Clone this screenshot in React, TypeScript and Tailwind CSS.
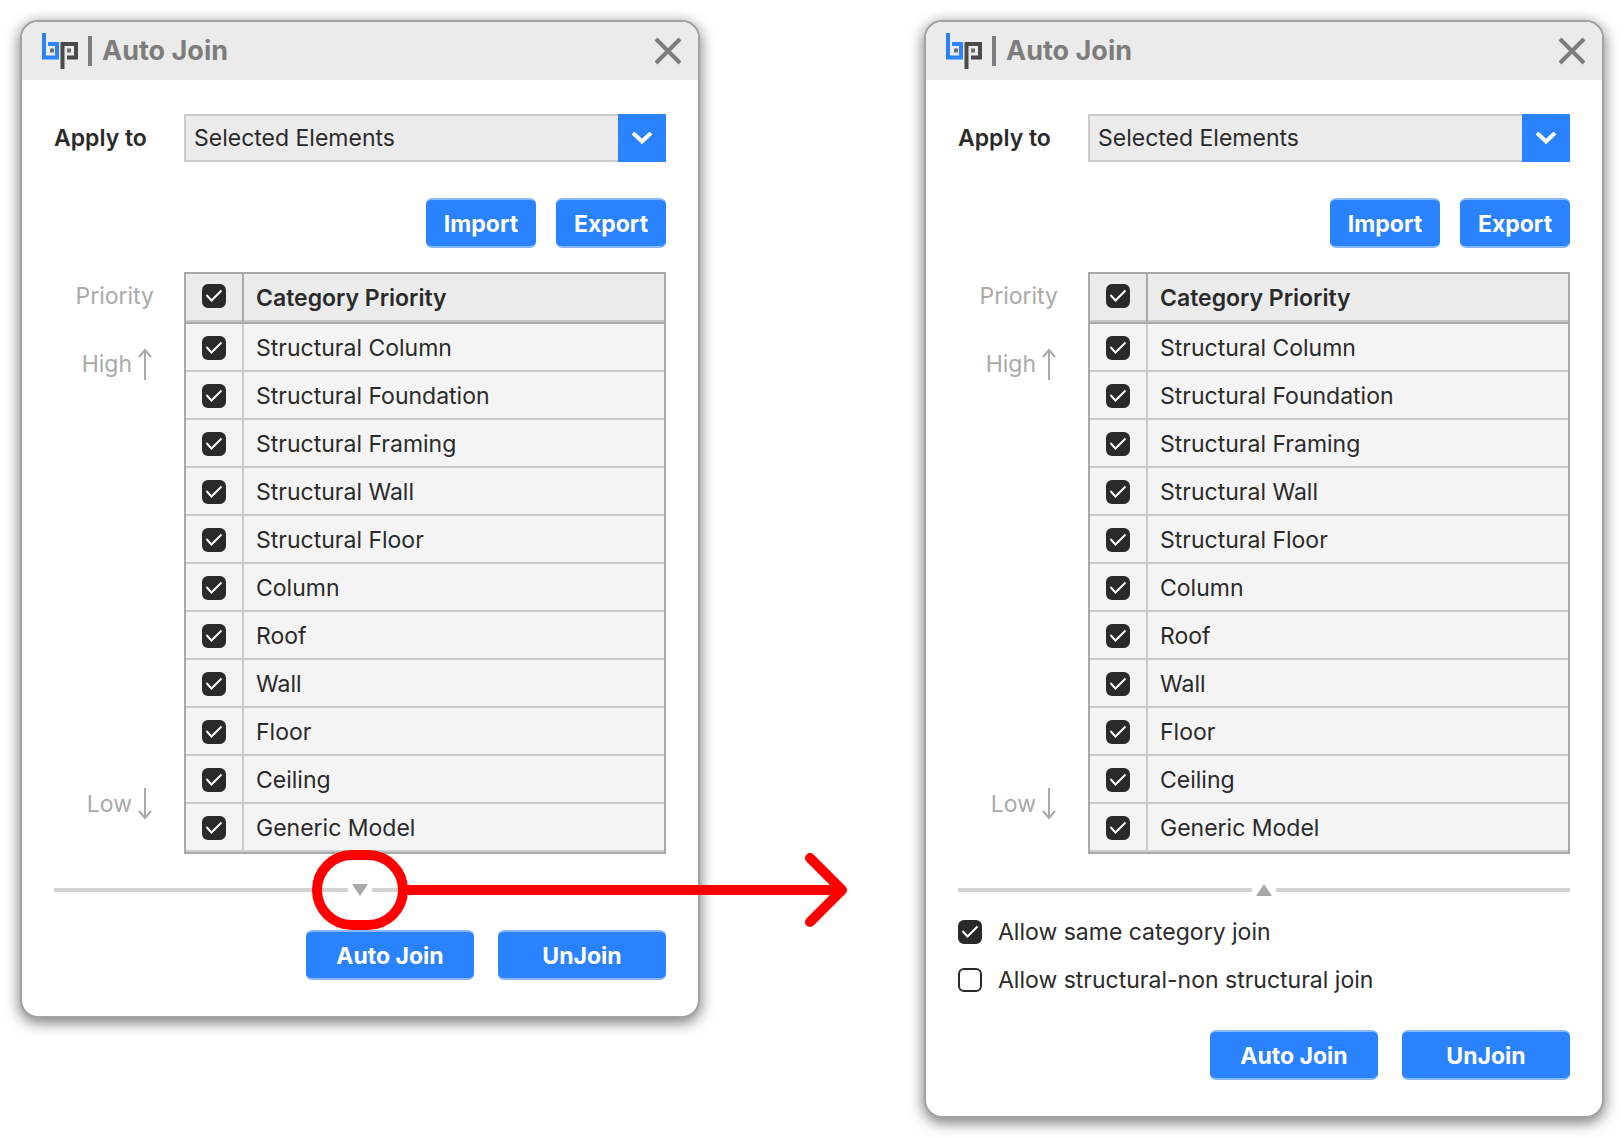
import { useId, useState } from "react";

const CATEGORIES = [
  "Structural Column",
  "Structural Foundation",
  "Structural Framing",
  "Structural Wall",
  "Structural Floor",
  "Column",
  "Roof",
  "Wall",
  "Floor",
  "Ceiling",
  "Generic Model",
];

function Logo() {
  return (
    <svg className="h-9 w-9 shrink-0" viewBox="0 0 36 36" fill="none" aria-hidden="true">
      <path d="M2 0V24.5H15V11H6" stroke="#2a82ff" strokeWidth="4" />
      <path d="M20.5 36V11H34V24.5H25" stroke="#4a4a4a" strokeWidth="4" />
      <rect x="8" y="15.5" width="4" height="4" fill="#6b6b6b" />
      <rect x="25" y="15.5" width="4" height="4" fill="#6b6b6b" />
    </svg>
  );
}

function CheckBox({ id, label, initial = true }: { id: string; label?: string; initial?: boolean }) {
  const [checked, setChecked] = useState(initial);
  return (
    <span className="grid size-6 shrink-0 grid-cols-1 grid-rows-1">
      <input
        id={id}
        type="checkbox"
        aria-label={label}
        checked={checked}
        onChange={() => setChecked(!checked)}
        className="col-start-1 row-start-1 size-6 appearance-none rounded-md border-2 border-[#2a2a2a] bg-white checked:bg-[#2a2a2a]"
      />
      {checked && (
        <svg
          className="pointer-events-none col-start-1 row-start-1 size-6"
          viewBox="0 0 24 24"
          fill="none"
          stroke="#ffffff"
          strokeWidth="2"
          aria-hidden="true"
        >
          <path d="M4.5 11L9.5 16.5L19.5 6.5" />
        </svg>
      )}
    </span>
  );
}

function LongArrow({ down = false }: { down?: boolean }) {
  return (
    <svg className="h-8 w-3.5" viewBox="0 0 14 32" fill="none" stroke="#a9a9a9" strokeWidth="2" aria-hidden="true">
      {down ? <path d="M7 0V31M1 23L7 30L13 23" /> : <path d="M7 32V1M1 9L7 2L13 9" />}
    </svg>
  );
}

function Button({ children, wide = false }: { children: string; wide?: boolean }) {
  return (
    <button
      type="button"
      className={`h-[50px] rounded-md border-y-2 border-[#86b7ff] bg-[#2a82ff] pt-0.5 text-[23px] font-bold text-white ${wide ? "w-[168px]" : "w-[110px]"}`}
    >
      {children}
    </button>
  );
}

function Callout() {
  return (
    <div className="pointer-events-none absolute top-1/2 left-1/2 z-10 flex -translate-x-12 -translate-y-1/2 items-center">
      <div className="h-20 w-24 shrink-0 rounded-[40px] border-10 border-[#ff0000]" />
      <svg
        className="-ml-1 h-20 w-[444px] shrink-0"
        viewBox="0 0 444 80"
        fill="none"
        stroke="#ff0000"
        strokeWidth="10"
        strokeLinecap="round"
        strokeLinejoin="round"
        aria-hidden="true"
      >
        <path d="M5 40H438M406 8L438 40L406 72" />
      </svg>
    </div>
  );
}

function Dialog({ expanded = false }: { expanded?: boolean }) {
  const id = useId();
  return (
    <section className="rounded-[18px] border-2 border-[#a2a2a2] bg-white text-[23px] leading-7 text-[#2a2a2a] shadow-[0_4px_14px_1px_rgba(0,0,0,0.5)]">
      <header className="flex h-[58px] items-center rounded-t-[16px] bg-[#ebebeb] pr-4 pl-5 text-[#7d7d7d]">
        <Logo />
        <span className="mr-2.5 ml-2.5 h-[30px] w-1 bg-[#7d7d7d]" />
        <h2 className="flex-1 text-[27px] font-bold">Auto Join</h2>
        <button type="button" aria-label="Close">
          <svg className="size-7" viewBox="0 0 28 28" fill="none" stroke="#7d7d7d" strokeWidth="4" aria-hidden="true">
            <path d="M2 2L26 26M26 2L2 26" />
          </svg>
        </button>
      </header>

      <div className="px-8 pt-[34px] pb-9">
        <div className="flex h-12 items-center">
          <label htmlFor={`${id}-scope`} className="w-[130px] shrink-0 font-semibold">
            Apply to
          </label>
          <div className="relative h-12 flex-1">
            <select
              id={`${id}-scope`}
              className="h-12 w-full appearance-none border-2 border-[#cbcbcb] bg-[#ebebeb] pl-2"
            >
              <option>Selected Elements</option>
            </select>
            <span className="pointer-events-none absolute inset-y-0 right-0 grid w-12 place-items-center bg-[#2a82ff]">
              <svg className="h-3 w-5" viewBox="0 0 20 12" fill="none" stroke="#ffffff" strokeWidth="4" aria-hidden="true">
                <path d="M1 1L10 9.5L19 1" />
              </svg>
            </span>
          </div>
        </div>

        <div className="mt-9 flex justify-end gap-5">
          <Button>Import</Button>
          <Button>Export</Button>
        </div>

        <div className="mt-6 flex">
          <div className="flex w-[130px] shrink-0 flex-col items-end pt-2.5 pr-[30px] pb-[34px] text-[#a9a9a9]">
            <span>Priority</span>
            <span className="mt-[38px] flex items-center gap-1.5 pr-0.5">
              High
              <LongArrow />
            </span>
            <span className="mt-auto flex items-center gap-1.5 pr-0.5">
              Low
              <LongArrow down />
            </span>
          </div>

          <div className="flex-1 border-2 border-[#a9a9a9]">
            <table className="w-full border-separate border-spacing-0">
              <thead>
                <tr className="bg-[#ebebeb]">
                  <th className="h-[50px] w-[58px] border-r-2 border-b-2 border-[#a9a9a9] p-0 pb-1 pl-4 shadow-[inset_0_-2px_0_#c6c6c6]">
                    <CheckBox id={`${id}-all`} label="All categories" />
                  </th>
                  <th className="border-b-2 border-[#a9a9a9] p-0 pl-3 text-left font-semibold shadow-[inset_0_-2px_0_#c6c6c6]">
                    Category Priority
                  </th>
                </tr>
              </thead>
              <tbody>
                {CATEGORIES.map((name, i) => (
                  <tr key={name} className="bg-[#f4f4f4]">
                    <td className="h-12 border-r-2 border-b-2 border-[#cbcbcb] p-0 pt-0.5 pl-4">
                      <CheckBox id={`${id}-cat-${i}`} />
                    </td>
                    <td className="border-b-2 border-[#cbcbcb] p-0 pt-0.5 pl-3">
                      <label htmlFor={`${id}-cat-${i}`}>{name}</label>
                    </td>
                  </tr>
                ))}
              </tbody>
            </table>
          </div>
        </div>

        <div className="relative mt-[26px] flex h-5 items-center gap-1">
          <span className="h-1 flex-1 bg-[#d2d2d2]" />
          <button type="button" aria-expanded={expanded} aria-label="More options">
            <svg className="h-3 w-4" viewBox="0 0 16 12" fill="#a9a9a9" aria-hidden="true">
              {expanded ? <path d="M8 0L16 12H0Z" /> : <path d="M0 0H16L8 12Z" />}
            </svg>
          </button>
          <span className="h-1 flex-1 bg-[#d2d2d2]" />
          {!expanded && <Callout />}
        </div>

        {expanded && (
          <div className="mt-[18px] flex flex-col gap-5">
            <div className="flex items-center gap-4">
              <CheckBox id={`${id}-same`} />
              <label htmlFor={`${id}-same`}>Allow same category join</label>
            </div>
            <div className="flex items-center gap-4">
              <CheckBox id={`${id}-mixed`} initial={false} />
              <label htmlFor={`${id}-mixed`}>Allow structural-non structural join</label>
            </div>
          </div>
        )}

        <div className={`flex justify-end gap-6 ${expanded ? "mt-9" : "mt-[30px]"}`}>
          <Button wide>Auto Join</Button>
          <Button wide>UnJoin</Button>
        </div>
      </div>
    </section>
  );
}

export default function App() {
  return (
    <main className="grid min-h-screen grid-cols-2 items-start gap-56 bg-white px-5 pt-5 font-['Inter',sans-serif]">
      <Dialog />
      <Dialog expanded />
    </main>
  );
}
